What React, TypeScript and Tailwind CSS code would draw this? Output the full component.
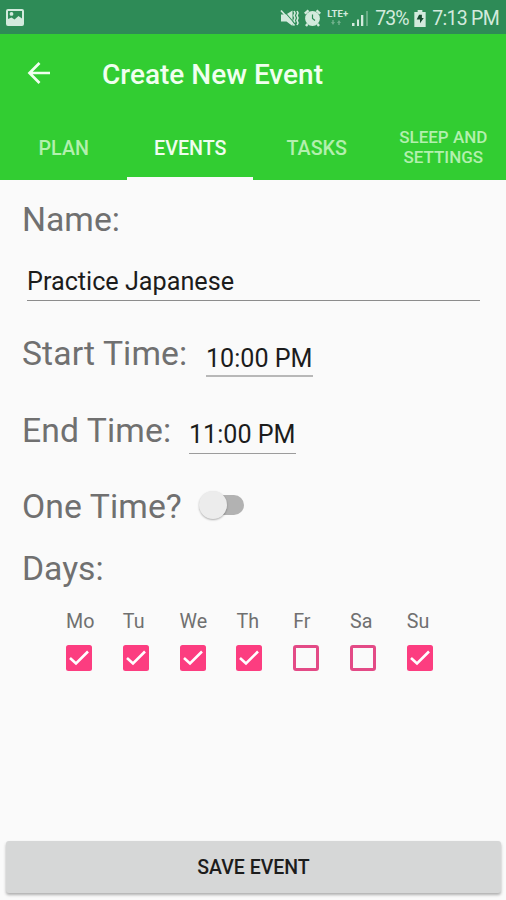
import type { ReactNode } from 'react';

const days = [
  { label: 'Mo', on: true },
  { label: 'Tu', on: true },
  { label: 'We', on: true },
  { label: 'Th', on: true },
  { label: 'Fr', on: false },
  { label: 'Sa', on: false },
  { label: 'Su', on: true },
];

function StatusBar() {
  return (
    <div className="flex h-[34px] items-center bg-[#2e8b57] pl-[6px] pr-[7px] pt-[2px] text-[#d3eadd]">
      <svg width="18" height="17" viewBox="0 0 18 17" className="mb-[1px]">
        <path fill="currentColor" fillRule="evenodd" d="M2 0h14a2 2 0 0 1 2 2v13a2 2 0 0 1-2 2H2a2 2 0 0 1-2-2V2a2 2 0 0 1 2-2zM2 2v8l3.500-1.500 3 2L12.500 7 16 9.500V2zM5.500 3a1.900 1.900 0 1 1 0 3.800a1.900 1.900 0 1 1 0-3.800z" />
      </svg>
      <div className="ml-auto flex items-center">
        <svg width="19" height="18" viewBox="0 0 19 18" fill="none" stroke="currentColor">
          <path fill="currentColor" stroke="none" d="M1 5.500h5l6.500-4v15.500l-6-4.500H1z" />
          <path stroke="#2e8b57" strokeWidth="1.100" d="M3.500 1.500l12 14" />
          <path strokeWidth="1.700" d="M1 1.500l13.500 15" />
          <path strokeWidth="1.600" d="M14 2l1 2-1 2.500 1 2.500-1 2.500 1 2M17 2l1 2-1 2.500 1 2.500-1 2.500 1 2.500-1 2" />
        </svg>
        <svg width="17" height="18" viewBox="0 0 17 18" className="ml-[5px]">
          <circle cx="8.500" cy="9.500" r="7.400" fill="currentColor" />
          <path d="M.8 4.700L4.500 1.300M16.200 4.700L12.500 1.300M3.500 15L2 17M13.500 15L15 17" stroke="currentColor" strokeWidth="2.400" />
          <path d="M8.500 5.500v4l2.500 2" stroke="#2e8b57" strokeWidth="1.200" fill="none" />
        </svg>
        <div className="ml-[6px] flex h-[18px] w-[23px] flex-col">
          <span className="text-[9.500px] font-bold leading-[9px] tracking-[0.200px]">LTE+</span>
          <svg width="14" height="6" viewBox="0 0 14 6" className="ml-[3px] mt-[2px] opacity-40" fill="currentColor">
            <path d="M3 5L1 2h1.300V0h1.400v2H5zM9 0l2 3H9.700v2H8.300V3H7z" />
          </svg>
        </div>
        <svg width="17" height="17" viewBox="0 0 17 17" className="ml-[2px]" fill="currentColor">
          <path d="M0 13h2.500v3H0zM5 9.500h2V16H5zM9 5h2.300v11H9z" />
          <path opacity=".35" d="M14 1h2v15h-2z" />
        </svg>
        <span className="ml-[6px] mt-px w-[34px] whitespace-nowrap text-[19.500px] tracking-[-0.900px]">73%</span>
        <svg width="12" height="17" viewBox="0 0 12 18" className="ml-[5px]">
          <path fill="currentColor" d="M3.500 0h5v2H12v16H0V2h3.500z" />
          <path fill="#174c31" d="M5 5h3v3.500h2L6 14V10H2.500z" />
        </svg>
        <span className="ml-[6px] mt-px whitespace-nowrap text-[19.500px] tracking-[-0.700px]">7:13 PM</span>
      </div>
    </div>
  );
}

function Tab({ children, className }: { children: ReactNode; className: string }) {
  return <div className={`flex flex-1 items-center justify-center border-b-[3px] text-center font-medium ${className}`}>{children}</div>;
}

function Check({ on }: { on: boolean }) {
  return on ? (
    <svg width="26" height="26" viewBox="0 0 26 26">
      <rect width="26" height="26" rx="2.500" fill="#fc3d80" />
      <path d="M4 13l6 5.500L22 6.500" fill="none" stroke="#fff" strokeWidth="2.600" />
    </svg>
  ) : (
    <span className="block h-[26px] w-[26px] rounded-[3px] border-[3px] border-[#e34a86]" />
  );
}

export default function App() {
  return (
    <div className="flex h-[900px] w-[506px] flex-col overflow-hidden bg-[#fafafa] font-[Roboto,sans-serif]">
      <StatusBar />
      <header className="h-[146px] bg-[#32cd32] text-white">
        <div className="flex h-[80px] items-center pl-[27px]">
          <svg width="24" height="24" viewBox="0 0 24 24" fill="none" stroke="#f0ffef" strokeWidth="2.700" className="-mt-[2px]">
            <path d="M23 12H3M12.500 2L2.500 12L12.500 22" />
          </svg>
          <h1 className="ml-[51px] pt-[2px] text-[28px] font-medium text-[#f0ffef]">Create New Event</h1>
        </div>
        <nav className="flex h-[66px] text-[19.700px]">
          <Tab className="border-transparent pl-px pt-[6px] text-[#b2f0ae]">PLAN</Tab>
          <Tab className="border-[#fafafa] pl-px pt-[6px] text-[#effdef]">EVENTS</Tab>
          <Tab className="border-transparent pl-px pt-[6px] text-[#b2f0ae]">TASKS</Tab>
          <Tab className="border-transparent pl-px pt-[3px] text-[17px] leading-[20px] text-[#b2f0ae]">SLEEP AND<br />SETTINGS</Tab>
        </nav>
      </header>
      <main className="flex-1 whitespace-nowrap pl-[22px] text-[33.700px] leading-[40px] text-[#707070]">
        <div className="pt-[20px]">Name:</div>
        <div className="ml-[5px] mt-[22px] h-[39px] w-[453px] border-b border-[#8c8c8c] text-[25.200px] text-[#1c1c1c]">Practice Japanese</div>
        <div className="mt-[33px] flex h-[43px] items-start">
          <span className="w-[184px] tracking-[0.100px]">Start Time:</span>
          <span className="mt-[5px] h-[38px] w-[107px] border-b-2 border-[#b8b8b8] text-[25.100px] text-[#1c1c1c]">10:00 PM</span>
        </div>
        <div className="mt-[34px] flex h-[43px] items-start">
          <span className="w-[167px] tracking-[0.100px]">End Time:</span>
          <span className="mt-[4px] h-[39px] w-[107px] border-b border-[#9c9c9c] text-[25.100px] text-[#1c1c1c]">11:00 PM</span>
        </div>
        <div className="mt-[33px] flex h-[40px] items-center">
          <span className="w-[177px] tracking-[0.100px]">One Time?</span>
          <span className="mb-[4px] flex h-[28px] items-center">
            <span className="z-10 h-[28px] w-[28px] rounded-full bg-[#ececec] shadow-[0_1px_2px_rgba(0,0,0,0.3)]" />
            <span className="-ml-[8px] h-[20px] w-[25px] rounded-r-full bg-[#b2b2b2]" />
          </span>
        </div>
        <div className="mt-[22px]">Days:</div>
        <div className="ml-[44px] mt-[21px] flex">
          {days.map((d) => (
            <div key={d.label} className="flex w-[56.800px] flex-col gap-[11px]">
              <span className="text-[19.700px] leading-[24px]">{d.label}</span>
              <Check on={d.on} />
            </div>
          ))}
        </div>
      </main>
      <button className="mb-[7px] ml-[6px] h-[52px] w-[495px] rounded-[3px] bg-[#d6d7d7] pt-[2px] text-[19.500px] font-medium text-[#1c1c1c] shadow-[0_2px_3px_rgba(0,0,0,0.3)]">SAVE EVENT</button>
    </div>
  );
}
